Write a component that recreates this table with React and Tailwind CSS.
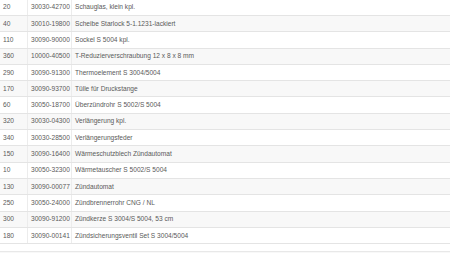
const ROWS = [
  ['20', '30030-42700', 'Schauglas, klein kpl.'],
  ['40', '30010-19800', 'Scheibe Starlock 5-1.1231-lackiert'],
  ['110', '30090-90000', 'Sockel S 5004 kpl.'],
  ['360', '10000-40500', 'T-Reduzierverschraubung 12 x 8 x 8 mm'],
  ['290', '30090-91300', 'Thermoelement S 3004/5004'],
  ['170', '30090-93700', 'Tülle für Druckstange'],
  ['60', '30050-18700', 'Überzündrohr S 5002/S 5004'],
  ['320', '30030-04300', 'Verlängerung kpl.'],
  ['340', '30030-28500', 'Verlängerungsfeder'],
  ['150', '30090-16400', 'Wärmeschutzblech Zündautomat'],
  ['10', '30050-32300', 'Wärmetauscher S 5002/S 5004'],
  ['130', '30090-00077', 'Zündautomat'],
  ['250', '30050-24000', 'Zündbrennerrohr CNG / NL'],
  ['300', '30090-91200', 'Zündkerze S 3004/S 5004, 53 cm'],
  ['180', '30090-00141', 'Zündsicherungsventil Set S 3004/5004'],
]

export default function App() {
  return (
    <div className="w-[450px] h-[253px] overflow-hidden bg-white text-[6.6px] text-[#5a5a5a] font-['Liberation_Sans',Arial,sans-serif]">
      <div className="-mt-[1.3px]">
        {ROWS.map(([pos, nr, name], i) => (
          <div
            key={nr}
            className={`grid grid-cols-[27px_44px_1fr] h-[16.3px] border-t border-[#e4e4e4] ${i % 2 ? 'bg-[#f8f8f8]' : 'bg-white'}`}
          >
            <div className="flex items-center pl-[3px]">{pos}</div>
            <div className="flex items-center pl-[3px] border-l border-[#ececec]">{nr}</div>
            <div className="flex items-center pl-[3px] border-l border-[#ececec]">{name}</div>
          </div>
        ))}
        <div className="border-t border-[#e4e4e4] h-[8px] bg-white" />
        <div className="border-t border-[#e8e8e8] h-[20px] bg-[#f8f8f8]" />
      </div>
    </div>
  )
}
